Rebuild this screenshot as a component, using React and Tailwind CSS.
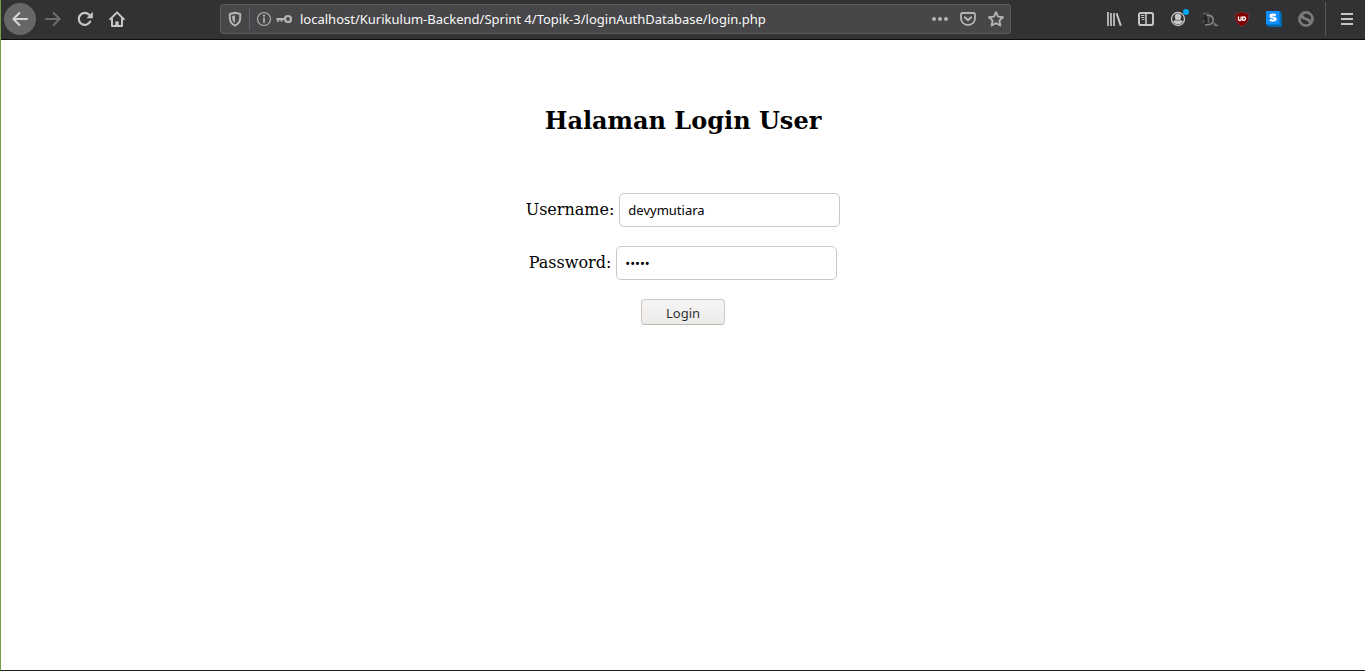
import React, { useState } from "react";

function Icon({ children, className = "" }) {
  return (
    <svg
      viewBox="0 0 16 16"
      className={`size-4 shrink-0 ${className}`}
      fill="none"
      stroke="currentColor"
      strokeWidth="2"
      strokeLinecap="round"
      strokeLinejoin="round"
      aria-hidden="true"
    >
      {children}
    </svg>
  );
}

function ToolButton({ label, children, className = "" }) {
  return (
    <button
      type="button"
      aria-label={label}
      className={`relative flex size-8 shrink-0 items-center justify-center ${className}`}
    >
      {children}
    </button>
  );
}

function Toolbar() {
  const [url, setUrl] = useState(
    "localhost/Kurikulum-Backend/Sprint 4/Topik-3/loginAuthDatabase/login.php"
  );
  return (
    <header className="flex h-10 items-center border-b border-[#0c0c0d] bg-[#323234] pb-px pl-[3px] pr-0.5 text-[#c6c6c7]">
      <nav className="flex items-center">
        <ToolButton label="Back" className="mr-px rounded-full bg-[#676768] text-[#d4d4d4]">
          <Icon>
            <path d="M15 8H1.600M7.400 2 1.400 8l6 6" />
          </Icon>
        </ToolButton>
        <ToolButton label="Forward" className="text-[#6d6d6e]">
          <Icon>
            <path d="M1 8h13.400M8.600 2l6 6-6 6" />
          </Icon>
        </ToolButton>
        <ToolButton label="Reload">
          <Icon>
            <path d="M13.200 10.600A6 6 0 1 1 12.200 3.800" strokeWidth="2.200" />
            <path d="M15.800.8V7.200H9.400z" fill="currentColor" stroke="none" />
          </Icon>
        </ToolButton>
        <ToolButton label="Home">
          <Icon>
            <path d="M1.200 8.200 8 1.400l6.800 6.800M3 8v7h10V8" />
            <path d="M6.300 15v-4.600h3.400V15z" fill="currentColor" stroke="none" />
          </Icon>
        </ToolButton>
      </nav>

      <div className="mx-[87px] flex h-[30px] min-w-0 grow items-center rounded-[3px] border border-[#5c5c5e] bg-[#474749] px-1.5 text-[#b4b4b5]">
        <Icon>
          <path d="M8 1.700 13.200 3v3.800c0 3.600-1.800 6.200-5.200 7.900-3.400-1.700-5.200-4.300-5.200-7.900V3z" />
          <path d="M8 4.300v7.700C5.900 10.600 5.200 8.800 5.200 6.600V5z" fill="currentColor" stroke="none" />
        </Icon>
        <span className="mx-1.5 h-[22px] w-px shrink-0 bg-[#5f6068]" />
        <Icon>
          <circle cx="8" cy="8" r="6.500" strokeWidth="1.100" />
          <path d="M8 7.300v4" strokeWidth="1.700" />
          <circle cx="8" cy="4.700" r="1.100" fill="currentColor" stroke="none" />
        </Icon>
        <Icon className="ml-1">
          <circle cx="12" cy="8" r="3" strokeWidth="2.200" />
          <path d="M9 8H.5M2 8v2.800M5.500 8v2.400" strokeWidth="2.200" strokeLinecap="butt" />
        </Icon>
        <input
          type="text"
          aria-label="Address"
          value={url}
          onChange={(e) => setUrl(e.target.value)}
          className="ml-2 h-7 min-w-0 grow bg-transparent font-['Noto_Sans',sans-serif] text-[13px] text-[#f9f9fa] outline-none"
        />
        <div className="flex items-center gap-3">
          <button type="button" aria-label="Page actions">
            <Icon>
              <g fill="currentColor" stroke="none">
                <circle cx="2" cy="8" r="2" />
                <circle cx="8" cy="8" r="2" />
                <circle cx="14" cy="8" r="2" />
              </g>
            </Icon>
          </button>
          <button type="button" aria-label="Save to Pocket">
            <Icon>
              <path d="M2.200 2h11.600a1.200 1.200 0 0 1 1.200 1.200V7.500a7 6.500 0 0 1-14 0V3.200A1.200 1.200 0 0 1 2.200 2z" strokeWidth="1.800" />
              <path d="M4.800 6.200 8 9.300l3.200-3.100" />
            </Icon>
          </button>
          <button type="button" aria-label="Bookmark this page">
            <Icon>
              <path d="m8 1.200 2.100 4.400 4.900.6-3.600 3.400.9 4.900L8 12.100l-4.300 2.400.9-4.900L1 6.200l4.900-.6z" strokeWidth="1.900" />
            </Icon>
          </button>
        </div>
      </div>

      <div className="flex items-center">
        <ToolButton label="Library">
          <Icon>
            <path d="M2 1v14M5 2v13M8 2v13" strokeWidth="1.700" strokeLinecap="butt" />
            <path d="M10.600 2.200 14.800 14.800" strokeLinecap="butt" />
          </Icon>
        </ToolButton>
        <ToolButton label="Sidebars">
          <Icon>
            <rect x="1" y="2" width="14" height="12" rx="1.800" />
            <path d="M8 2v12" strokeWidth="1.600" />
            <path d="M3 4.500h3.400M3 6.500h3.400M4 8.500h2.400" strokeWidth="1" strokeLinecap="butt" />
          </Icon>
        </ToolButton>
        <ToolButton label="Account">
          <Icon>
            <circle cx="8" cy="8" r="6.500" strokeWidth="1.300" />
            <circle cx="8" cy="6" r="3.200" fill="currentColor" stroke="none" />
            <path d="M3 10c1 .2 1.700-.9 2.800-.9.700.8 3.700.8 4.400 0 1.100 0 1.800 1.100 2.800.9a5.400 5.400 0 0 1-10 0z" fill="currentColor" stroke="none" />
          </Icon>
          <span className="absolute right-[5px] top-[6px] size-1.5 rounded-full bg-[#00a8f3]" />
        </ToolButton>
        <ToolButton label="Downloader">
          <Icon>
            <path d="M.5 2.500H4c3 0 4 1.500 4 4M.5 10.500H4" stroke="#555556" strokeWidth="1.800" strokeLinecap="butt" />
            <path d="M3.500 4v9.500" stroke="#1d1d1e" strokeWidth="1.600" strokeLinecap="butt" />
            <path d="M4.500 4.500h2c3.200 0 4.700 1.900 4.700 4.600s-1.500 4.600-4.700 4.600H3" stroke="#858587" strokeWidth="1.600" strokeLinecap="butt" />
            <path d="M6.500 6v6" stroke="#606062" strokeWidth="1.300" strokeLinecap="butt" />
            <path d="M12.600 11.800v2.500H16" stroke="#7e7e80" strokeWidth="1.500" strokeLinecap="butt" />
          </Icon>
        </ToolButton>
        <ToolButton label="uBlock Origin">
          <Icon>
            <path d="M8 .6c2 1.400 4.300 2 6.800 2.200 0 5.700-.4 9.300-6.800 12.700C1.600 12.100 1.200 8.500 1.200 2.800 3.700 2.600 6 2 8 .6z" fill="#800000" stroke="#6a3a3b" strokeWidth=".9" />
            <path d="M4.500 5.600v2.600a1.300 1.300 0 0 0 2.600 0V5.600" stroke="#fff" strokeWidth="1.300" strokeLinecap="butt" />
            <path d="M8.700 5.800h1.100a1.750 1.750 0 0 1 0 3.500H8.700z" stroke="#fff" strokeWidth="1.300" />
          </Icon>
        </ToolButton>
        <ToolButton label="Stylus">
          <Icon>
            <path d="M13.500 0 16 2.500V16H2.500L0 13.500z" fill="#0067ad" stroke="none" />
            <path d="M0 0h13.500v13.500H0z" fill="#0f8fff" stroke="none" />
            <path d="M9.800 4.300c-1-.7-5.400-1.200-5.400.7 0 2 5.200 1 5.200 3.100 0 2-4.300 1.700-5.700.6" stroke="#fff" strokeWidth="2.200" strokeLinecap="butt" />
          </Icon>
        </ToolButton>
        <ToolButton label="Blocking disabled" className="text-[#7b7b7c]">
          <Icon>
            <circle cx="8" cy="8" r="6.600" strokeWidth="2.600" />
            <path d="M2.500 5.800 13.500 10.200" strokeWidth="2.800" strokeLinecap="butt" />
            <path d="M4 4.300 6 7M12 11.700 10 9" strokeWidth="2.200" />
          </Icon>
        </ToolButton>
        <span className="ml-[3px] mr-[5px] h-[34px] w-px shrink-0 bg-[#58585a]" />
        <ToolButton label="Open menu">
          <Icon>
            <path d="M2 3h12M2 8h12M2 13h12" strokeLinecap="butt" />
          </Icon>
        </ToolButton>
      </div>
    </header>
  );
}

function Field({ id, label, type, value, onChange }) {
  return (
    <div className="flex items-center justify-center gap-[5px]">
      <label htmlFor={id}>{label}</label>
      <input
        id={id}
        type={type}
        value={value}
        onChange={(e) => onChange(e.target.value)}
        className="h-[34px] w-[221px] rounded-[5px] border border-[#cdc7c2] bg-white px-2 font-['Noto_Sans',sans-serif] text-[13px] text-black outline-none"
      />
    </div>
  );
}

export default function App() {
  const [username, setUsername] = useState("devymutiara");
  const [password, setPassword] = useState("login");
  return (
    <div className="flex min-h-screen flex-col border-b border-l border-b-[#1c1c1d] border-l-[#73a14b] bg-white">
      <Toolbar />
      <main className="pt-[67px] font-['DejaVu_Serif',serif] text-base text-black">
        <h1 className="text-center text-2xl leading-7 font-bold">Halaman Login User</h1>
        <form className="mt-[58px] flex flex-col gap-[19px]" onSubmit={(e) => e.preventDefault()}>
          <Field id="username" label="Username:" type="text" value={username} onChange={setUsername} />
          <Field id="password" label="Password:" type="password" value={password} onChange={setPassword} />
          <button
            type="submit"
            className="h-[26px] w-[84px] self-center rounded-[4px] border border-[#cdc7c2] border-b-[#bfb8b1] bg-linear-to-b from-[#f6f5f4] to-[#edebe9] pt-0.5 font-['Noto_Sans',sans-serif] text-[13px] leading-5 text-[#2e3436]"
          >
            Login
          </button>
        </form>
      </main>
    </div>
  );
}
